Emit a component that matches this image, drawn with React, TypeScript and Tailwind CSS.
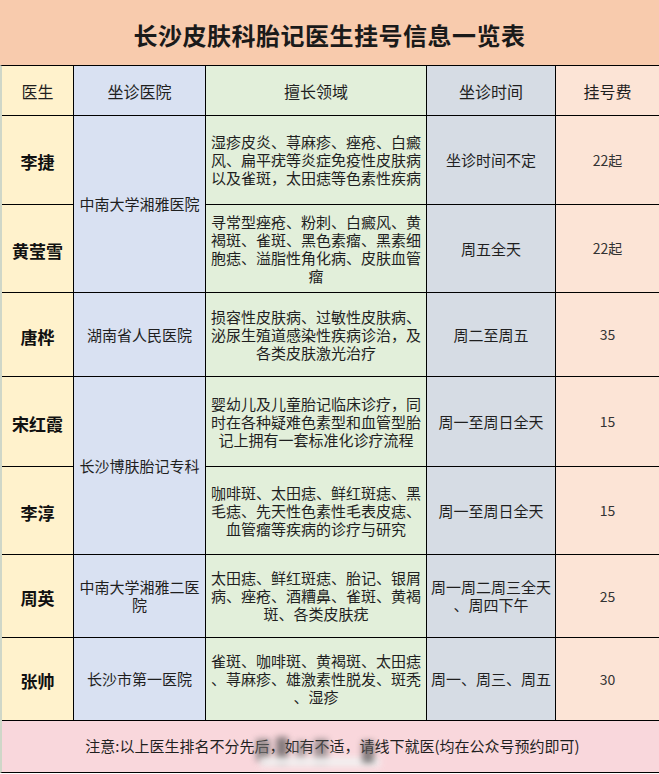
import React from "react";

const FONT = { fontFamily: '"Noto Sans CJK SC", "Liberation Sans", sans-serif' };

type Row = {
  name: string;
  spec: string[];
  time: string[];
  fee: string;
};

const rows: Row[] = [
  {
    name: "李捷",
    spec: ["湿疹皮炎、荨麻疹、痤疮、白癜", "风、扁平疣等炎症免疫性皮肤病", "以及雀斑，太田痣等色素性疾病"],
    time: ["坐诊时间不定"],
    fee: "22起",
  },
  {
    name: "黄莹雪",
    spec: ["寻常型痤疮、粉刺、白癜风、黄", "褐斑、雀斑、黑色素瘤、黑素细", "胞痣、溢脂性角化病、皮肤血管", "瘤"],
    time: ["周五全天"],
    fee: "22起",
  },
  {
    name: "唐桦",
    spec: ["损容性皮肤病、过敏性皮肤病、", "泌尿生殖道感染性疾病诊治，及", "各类皮肤激光治疗"],
    time: ["周二至周五"],
    fee: "35",
  },
  {
    name: "宋红霞",
    spec: ["婴幼儿及儿童胎记临床诊疗，同", "时在各种疑难色素型和血管型胎", "记上拥有一套标准化诊疗流程"],
    time: ["周一至周日全天"],
    fee: "15",
  },
  {
    name: "李淳",
    spec: ["咖啡斑、太田痣、鲜红斑痣、黑", "毛痣、先天性色素性毛表皮痣、", "血管瘤等疾病的诊疗与研究"],
    time: ["周一至周日全天"],
    fee: "15",
  },
  {
    name: "周英",
    spec: ["太田痣、鲜红斑痣、胎记、银屑", "病、痤疮、酒糟鼻、雀斑、黄褐", "斑、各类皮肤疣"],
    time: ["周一周二周三全天", "、周四下午"],
    fee: "25",
  },
  {
    name: "张帅",
    spec: ["雀斑、咖啡斑、黄褐斑、太田痣", "、荨麻疹、雄激素性脱发、斑秃", "、湿疹"],
    time: ["周一、周三、周五"],
    fee: "30",
  },
];

// hospitals: index of starting row, span, lines
const hospitals: { start: number; span: number; lines: string[] }[] = [
  { start: 0, span: 2, lines: ["中南大学湘雅医院"] },
  { start: 2, span: 1, lines: ["湖南省人民医院"] },
  { start: 3, span: 2, lines: ["长沙博肤胎记专科"] },
  { start: 5, span: 1, lines: ["中南大学湘雅二医", "院"] },
  { start: 6, span: 1, lines: ["长沙市第一医院"] },
];

function Lines({ lines }: { lines: string[] }) {
  return (
    <div className="text-center">
      {lines.map((l, i) => (
        <div key={i} className="whitespace-nowrap">
          {l}
        </div>
      ))}
    </div>
  );
}

export default function App() {
  const cells: React.ReactNode[] = [];

  rows.forEach((r, i) => {
    const rowLine = i + 2; // grid row (1-based), header is row 1
    cells.push(
      <div
        key={`n${i}`}
        className="bg-[#fff2cc] flex items-center justify-center pt-1 text-[17px] font-bold text-[#111]"
        style={{ gridRow: rowLine, gridColumn: 1 }}
      >
        {r.name}
      </div>
    );
    const h = hospitals.find((x) => x.start === i);
    if (h) {
      cells.push(
        <div
          key={`h${i}`}
          className="bg-[#d9e1f2] flex items-center justify-center text-[15px] leading-[18px] text-[#1f1f1f]"
          style={{ gridRow: `${rowLine} / span ${h.span}`, gridColumn: 2 }}
        >
          <Lines lines={h.lines} />
        </div>
      );
    }
    cells.push(
      <div
        key={`s${i}`}
        className="bg-[#e2efda] flex items-center justify-center text-[15px] leading-[18px] text-[#1f1f1f]"
        style={{ gridRow: rowLine, gridColumn: 3 }}
      >
        <Lines lines={r.spec} />
      </div>
    );
    cells.push(
      <div
        key={`t${i}`}
        className="bg-[#d6dce4] flex items-center justify-center text-[15px] leading-[18px] text-[#1f1f1f]"
        style={{ gridRow: rowLine, gridColumn: 4 }}
      >
        <Lines lines={r.time} />
      </div>
    );
    cells.push(
      <div
        key={`f${i}`}
        className="bg-[#fce4d6] flex items-center justify-center text-[14px] text-[#333]"
        style={{ gridRow: rowLine, gridColumn: 5 }}
      >
        {r.fee}
      </div>
    );
  });

  return (
    <div className="w-[659px] h-[774px] bg-white overflow-hidden" style={FONT}>
      <div className="h-[65px] bg-[#f8cbad] flex items-center justify-center pt-1">
        <h1 className="text-[24px] font-bold text-[#1a1a1a] tracking-[0.5px]">长沙皮肤科胎记医生挂号信息一览表</h1>
      </div>
      <div className="grid grid-cols-[71px_131px_220px_128px_1fr] grid-rows-[49px_88px_87px_83px_89px_87px_82px_82px_51px] gap-px bg-black border-t border-b border-t-black border-b-black border-l-2 border-l-[#cfd7c8]">
        <div className="bg-[#fff2cc] flex items-center justify-center text-[16px] text-[#1f1f1f]">医生</div>
        <div className="bg-[#d9e1f2] flex items-center justify-center text-[16px] text-[#1f1f1f]">坐诊医院</div>
        <div className="bg-[#e2efda] flex items-center justify-center text-[16px] text-[#1f1f1f]">擅长领域</div>
        <div className="bg-[#d6dce4] flex items-center justify-center text-[16px] text-[#1f1f1f]">坐诊时间</div>
        <div className="bg-[#fce4d6] flex items-center justify-center text-[16px] text-[#1f1f1f]">挂号费</div>
        {cells}
        <div className="col-span-5 bg-[#f9d7dc] relative flex items-center justify-center text-[15px] text-[#1f1f1f] pl-1">
          <span className="whitespace-nowrap">注意:以上医生排名不分先后，如有不适，请线下就医(均在公众号预约即可)</span>
          <div className="absolute left-[250px] top-[16px] w-[140px] h-[34px] pointer-events-none">
            <div className="absolute left-[4px] top-[2px] w-[14px] h-[22px] bg-[#6b6b6b] blur-[3px] opacity-70" />
            <div className="absolute left-[24px] top-[0px] w-[12px] h-[26px] bg-[#555] blur-[3px] opacity-70" />
            <div className="absolute left-[44px] top-[4px] w-[10px] h-[20px] bg-[#777] blur-[3px] opacity-60" />
            <div className="absolute left-[62px] top-[2px] w-[14px] h-[24px] bg-[#666] blur-[3px] opacity-60" />
            <div className="absolute left-[8px] top-[20px] w-[120px] h-[10px] bg-[#f2f2f2] blur-[3px] opacity-90" />
            <div className="absolute left-[110px] top-[4px] w-[12px] h-[22px] bg-[#555] blur-[3px] opacity-70" />
          </div>
        </div>
      </div>
    </div>
  );
}
